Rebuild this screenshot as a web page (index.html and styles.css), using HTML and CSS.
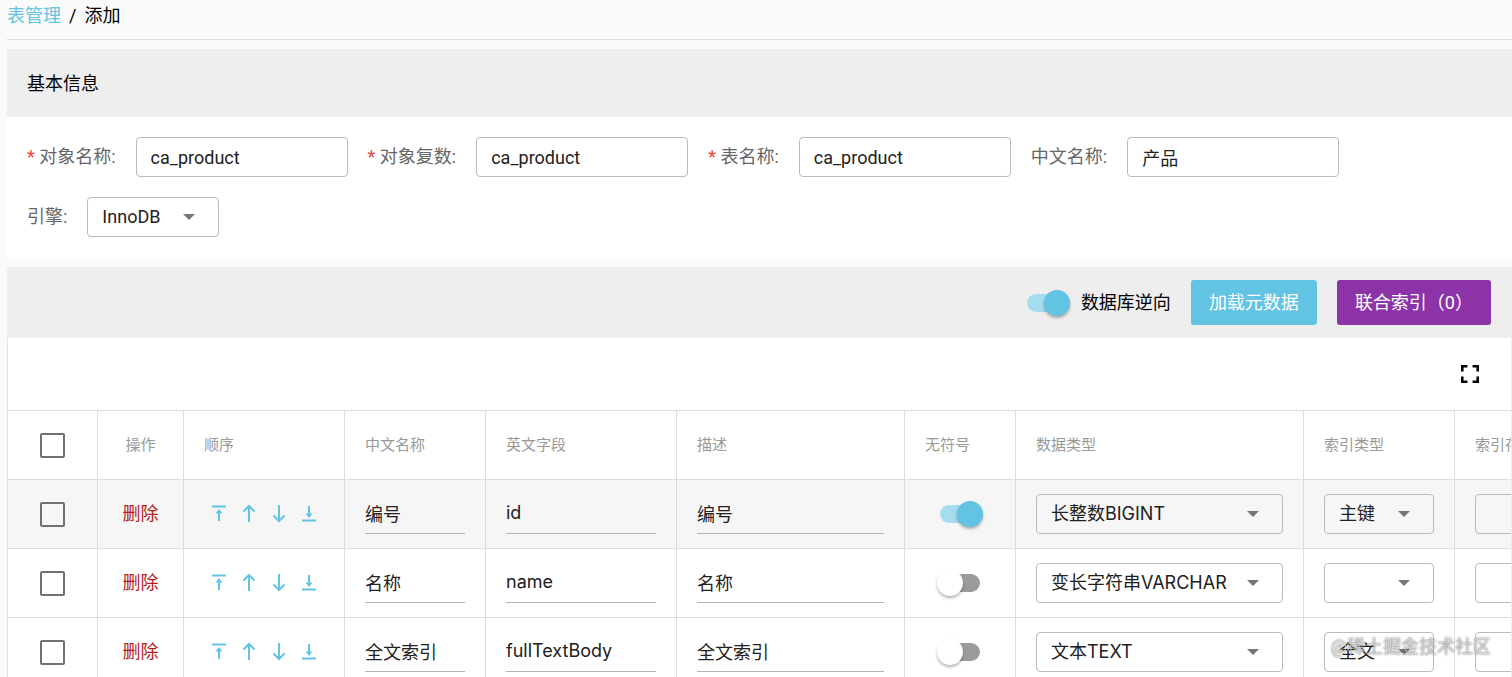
FILE: index.html
```
<!DOCTYPE html>
<html lang="zh-CN">
	<head>
		<meta charset="utf-8">
		<title>表管理 / 添加</title>
		<link rel="stylesheet" href="styles.css">
	</head>
	<body>
		<!-- 图标 -->
		<svg class="sprite" aria-hidden="true">
			<symbol id="i-top" viewBox="0 0 18 20"><path d="M2 2.500h14M9 17V8" /><path class="fill" d="M9 5l3.500 4.500h-7z" /></symbol>
			<symbol id="i-up" viewBox="0 0 18 20"><path d="M9 18V2M3.500 7.500L9 2l5.500 5.500" /></symbol>
			<symbol id="i-down" viewBox="0 0 18 20"><path d="M9 1v16M3.500 11.500L9 17l5.500-5.500" /></symbol>
			<symbol id="i-bottom" viewBox="0 0 18 20"><path d="M2 16.500h14M9 2v9" /><path class="fill" d="M9 14l3.500-4.500h-7z" /></symbol>
		</svg>

		<div class="page">
			<nav class="breadcrumb">
				<a href="#">表管理</a>
				<span>/</span>
				<span>添加</span>
			</nav>

			<!-- 基本信息 -->
			<section class="card">
				<h2 class="card-title">基本信息</h2>
				<form class="form">
					<div class="form-item">
						<label for="objName"><i>*</i> 对象名称:</label>
						<input class="text-box" id="objName" type="text" value="ca_product">
					</div>
					<div class="form-item">
						<label for="objPlural"><i>*</i> 对象复数:</label>
						<input class="text-box" id="objPlural" type="text" value="ca_product">
					</div>
					<div class="form-item">
						<label for="tableName"><i>*</i> 表名称:</label>
						<input class="text-box" id="tableName" type="text" value="ca_product">
					</div>
					<div class="form-item">
						<label for="cnName">中文名称:</label>
						<input class="text-box" id="cnName" type="text" value="产品">
					</div>
					<div class="form-item">
						<label for="engine">引擎:</label>
						<div class="select select-engine">
							<select id="engine"><option>InnoDB</option></select>
						</div>
					</div>
				</form>
			</section>

			<!-- 字段列表 -->
			<section class="card">
				<div class="action-bar">
					<label class="switch-label"><input class="switch" type="checkbox" checked>数据库逆向</label>
					<button class="btn btn-primary" type="button">加载元数据</button>
					<button class="btn btn-purple" type="button">联合索引（0）</button>
				</div>
				<div class="table-box">
					<div class="table-tools">
						<button class="icon-btn" type="button" aria-label="全屏">
							<svg width="18" height="18" viewBox="5 5 14 14"><path d="M7 14H5v5h5v-2H7v-3zm-2-4h2V7h3V5H5v5zm12 7h-3v2h5v-5h-2v3zM14 5v2h3v3h2V5h-5z"/></svg>
						</button>
					</div>
					<table class="table">
						<colgroup>
							<col class="c-check"><col class="c-action"><col class="c-order"><col class="c-cn"><col class="c-en">
							<col class="c-desc"><col class="c-sign"><col class="c-type"><col class="c-index"><col class="c-method">
						</colgroup>
						<thead>
							<tr>
								<th class="center"><input class="check" type="checkbox" aria-label="全选"></th>
								<th class="center">操作</th>
								<th>顺序</th>
								<th>中文名称</th>
								<th>英文字段</th>
								<th>描述</th>
								<th>无符号</th>
								<th>数据类型</th>
								<th>索引类型</th>
								<th>索引存储类型</th>
							</tr>
						</thead>
						<tbody>
							<tr class="hover">
								<td class="center"><input class="check" type="checkbox" aria-label="选择"></td>
								<td class="center"><a class="del" href="#">删除</a></td>
								<td>
									<div class="order">
										<button type="button" aria-label="置顶"><svg><use href="#i-top"/></svg></button>
										<button type="button" aria-label="上移"><svg><use href="#i-up"/></svg></button>
										<button type="button" aria-label="下移"><svg><use href="#i-down"/></svg></button>
										<button type="button" aria-label="置底"><svg><use href="#i-bottom"/></svg></button>
									</div>
								</td>
								<td><input class="line-box" type="text" value="编号" aria-label="中文名称"></td>
								<td><input class="line-box" type="text" value="id" aria-label="英文字段"></td>
								<td><input class="line-box" type="text" value="编号" aria-label="描述"></td>
								<td><input class="switch" type="checkbox" checked aria-label="无符号"></td>
								<td><div class="select"><select aria-label="数据类型"><option>长整数BIGINT</option></select></div></td>
								<td><div class="select"><select aria-label="索引类型"><option>主键</option></select></div></td>
								<td><div class="select"><select aria-label="索引存储类型"><option></option></select></div></td>
							</tr>
							<tr>
								<td class="center"><input class="check" type="checkbox" aria-label="选择"></td>
								<td class="center"><a class="del" href="#">删除</a></td>
								<td>
									<div class="order">
										<button type="button" aria-label="置顶"><svg><use href="#i-top"/></svg></button>
										<button type="button" aria-label="上移"><svg><use href="#i-up"/></svg></button>
										<button type="button" aria-label="下移"><svg><use href="#i-down"/></svg></button>
										<button type="button" aria-label="置底"><svg><use href="#i-bottom"/></svg></button>
									</div>
								</td>
								<td><input class="line-box" type="text" value="名称" aria-label="中文名称"></td>
								<td><input class="line-box" type="text" value="name" aria-label="英文字段"></td>
								<td><input class="line-box" type="text" value="名称" aria-label="描述"></td>
								<td><input class="switch" type="checkbox" aria-label="无符号"></td>
								<td><div class="select"><select aria-label="数据类型"><option>变长字符串VARCHAR</option></select></div></td>
								<td><div class="select"><select aria-label="索引类型"><option></option></select></div></td>
								<td><div class="select"><select aria-label="索引存储类型"><option></option></select></div></td>
							</tr>
							<tr>
								<td class="center"><input class="check" type="checkbox" aria-label="选择"></td>
								<td class="center"><a class="del" href="#">删除</a></td>
								<td>
									<div class="order">
										<button type="button" aria-label="置顶"><svg><use href="#i-top"/></svg></button>
										<button type="button" aria-label="上移"><svg><use href="#i-up"/></svg></button>
										<button type="button" aria-label="下移"><svg><use href="#i-down"/></svg></button>
										<button type="button" aria-label="置底"><svg><use href="#i-bottom"/></svg></button>
									</div>
								</td>
								<td><input class="line-box" type="text" value="全文索引" aria-label="中文名称"></td>
								<td><input class="line-box" type="text" value="fullTextBody" aria-label="英文字段"></td>
								<td><input class="line-box" type="text" value="全文索引" aria-label="描述"></td>
								<td><input class="switch" type="checkbox" aria-label="无符号"></td>
								<td><div class="select"><select aria-label="数据类型"><option>文本TEXT</option></select></div></td>
								<td><div class="select"><select aria-label="索引类型"><option>全文</option></select></div></td>
								<td><div class="select"><select aria-label="索引存储类型"><option></option></select></div></td>
							</tr>
						</tbody>
					</table>
				</div>
			</section>
		</div>
		<div class="watermark">@稀土掘金技术社区</div>
	</body>
</html>
```

FILE: styles.css
```
*{
	margin: 0;
	padding: 0;
	box-sizing: border-box;
}
body{
	height: 100vh;
	overflow: hidden;
	background: #fafafa;
	color: #000;
	font: 18px/24px Roboto, "Noto Sans CJK SC", sans-serif;
}
input, select, button{
	font: inherit;
	color: inherit;
}
a{
	text-decoration: none;
}
.sprite{
	display: none;
}
.page{
	padding-left: 7px;
}
.breadcrumb{
	display: flex;
	gap: 8px;
	height: 40px;
	padding-top: 4px;
	border-bottom: 1px solid #dcdcdc;
	margin-bottom: 9px;
}
.breadcrumb a{
	color: #62c4e2;
}

/* 卡片 */
.card{
	margin-bottom: 10px;
	background: #fff;
}
.card-title{
	padding: 23px 20px 21px;
	background: #eee;
	font-size: 18px;
	font-weight: 400;
}
.form{
	display: flex;
	flex-wrap: wrap;
	gap: 20px;
	padding: 20px;
}
.form-item{
	display: flex;
	align-items: center;
	gap: 20px;
}
.form-item label{
	color: #666;
}
.form-item i{
	color: #f44336;
	font-style: normal;
}
.text-box{
	width: 212px;
	height: 40px;
	padding: 0 14px;
	border: 1px solid #bbb;
	border-radius: 4px;
	background: #fff;
	color: #212121;
}

/* 下拉框 */
.select{
	position: relative;
}
.select-engine{
	width: 132px;
}
.select select{
	display: block;
	width: 100%;
	height: 40px;
	padding: 0 14px;
	border: 1px solid #bbb;
	border-radius: 4px;
	background: transparent;
	color: #212121;
	appearance: none;
}
.select::after{
	content: "";
	position: absolute;
	top: 17px;
	right: 24px;
	border: 6px solid transparent;
	border-top-color: #757575;
	border-bottom: 0;
	pointer-events: none;
}

/* 操作栏 */
.action-bar{
	display: flex;
	align-items: center;
	justify-content: flex-end;
	gap: 20px;
	height: 71px;
	padding-right: 21px;
	background: #eee;
}
.switch-label{
	display: flex;
	align-items: center;
	gap: 14px;
}
.btn{
	height: 45px;
	padding: 0 18px;
	border: 0;
	border-radius: 3px;
	color: #fff;
}
.btn-primary{
	background: #62c4e2;
}
.btn-purple{
	background: #8c33a8;
}
.switch{
	position: relative;
	display: block;
	width: 40px;
	height: 18px;
	margin: 0 auto;
	border-radius: 9px;
	background: #9b9b9b;
	appearance: none;
}
.switch::before{
	content: "";
	position: absolute;
	top: -4px;
	left: -3px;
	width: 26px;
	height: 26px;
	border-radius: 50%;
	background: #fff;
	box-shadow: 0 2px 3px rgba(0,0,0,.3);
}
.switch:checked{
	background: #a5dcee;
}
.switch:checked::before{
	left: 17px;
	background: #62c4e2;
}

/* 表格 */
.table-box{
	overflow: hidden;
	border-left: 1px solid #e2e2e2;
	border-right: 1px solid #eee;
}
.table-tools{
	display: flex;
	align-items: center;
	justify-content: flex-end;
	height: 72px;
	padding-right: 32px;
}
.icon-btn{
	border: 0;
	background: none;
}
.icon-btn svg{
	display: block;
}
.table{
	width: 1648px;
	table-layout: fixed;
	border-collapse: separate;
	border-spacing: 0;
	border-top: 1px solid #ddd;
	font-family: Inter, "Noto Sans CJK SC", sans-serif;
}
.c-check{ width: 90px; }
.c-action{ width: 86px; }
.c-order{ width: 161px; }
.c-cn{ width: 141px; }
.c-en{ width: 191px; }
.c-desc{ width: 228px; }
.c-sign{ width: 111px; }
.c-type{ width: 288px; }
.c-index{ width: 151px; }
.table th,
.table td{
	height: 69px;
	padding: 0 20px;
	border-right: 1px solid #ddd;
	border-bottom: 1px solid #ddd;
	text-align: left;
	white-space: nowrap;
}
.table th{
	color: #999;
	font-size: 15px;
	font-weight: 400;
}
.table .center{
	text-align: center;
}
.table .hover{
	background: #f6f6f6;
}
.check{
	display: block;
	width: 25px;
	height: 25px;
	margin: 0 auto;
	border: 2px solid #707070;
	border-radius: 2px;
	appearance: none;
}
.del{
	color: #b71c1c;
}
.order{
	display: flex;
}
.order button{
	width: 30px;
	height: 20px;
	border: 0;
	background: none;
}
.order svg{
	display: block;
	width: 18px;
	height: 20px;
	margin: 0 auto;
	fill: none;
	stroke: #62c4e2;
	stroke-width: 2;
}
.fill{
	fill: #62c4e2;
	stroke: none;
}
.line-box{
	display: block;
	width: 100%;
	height: 40px;
	padding-bottom: 2px;
	border: 0;
	border-bottom: 1px solid #b5b5b5;
	background: transparent;
	color: #212121;
}

/* 水印 */
.watermark{
	position: fixed;
	right: 21px;
	bottom: 18px;
	color: rgba(255,255,255,.6);
	text-shadow: 0 0 2px rgba(0,0,0,.7);
	pointer-events: none;
}
```
